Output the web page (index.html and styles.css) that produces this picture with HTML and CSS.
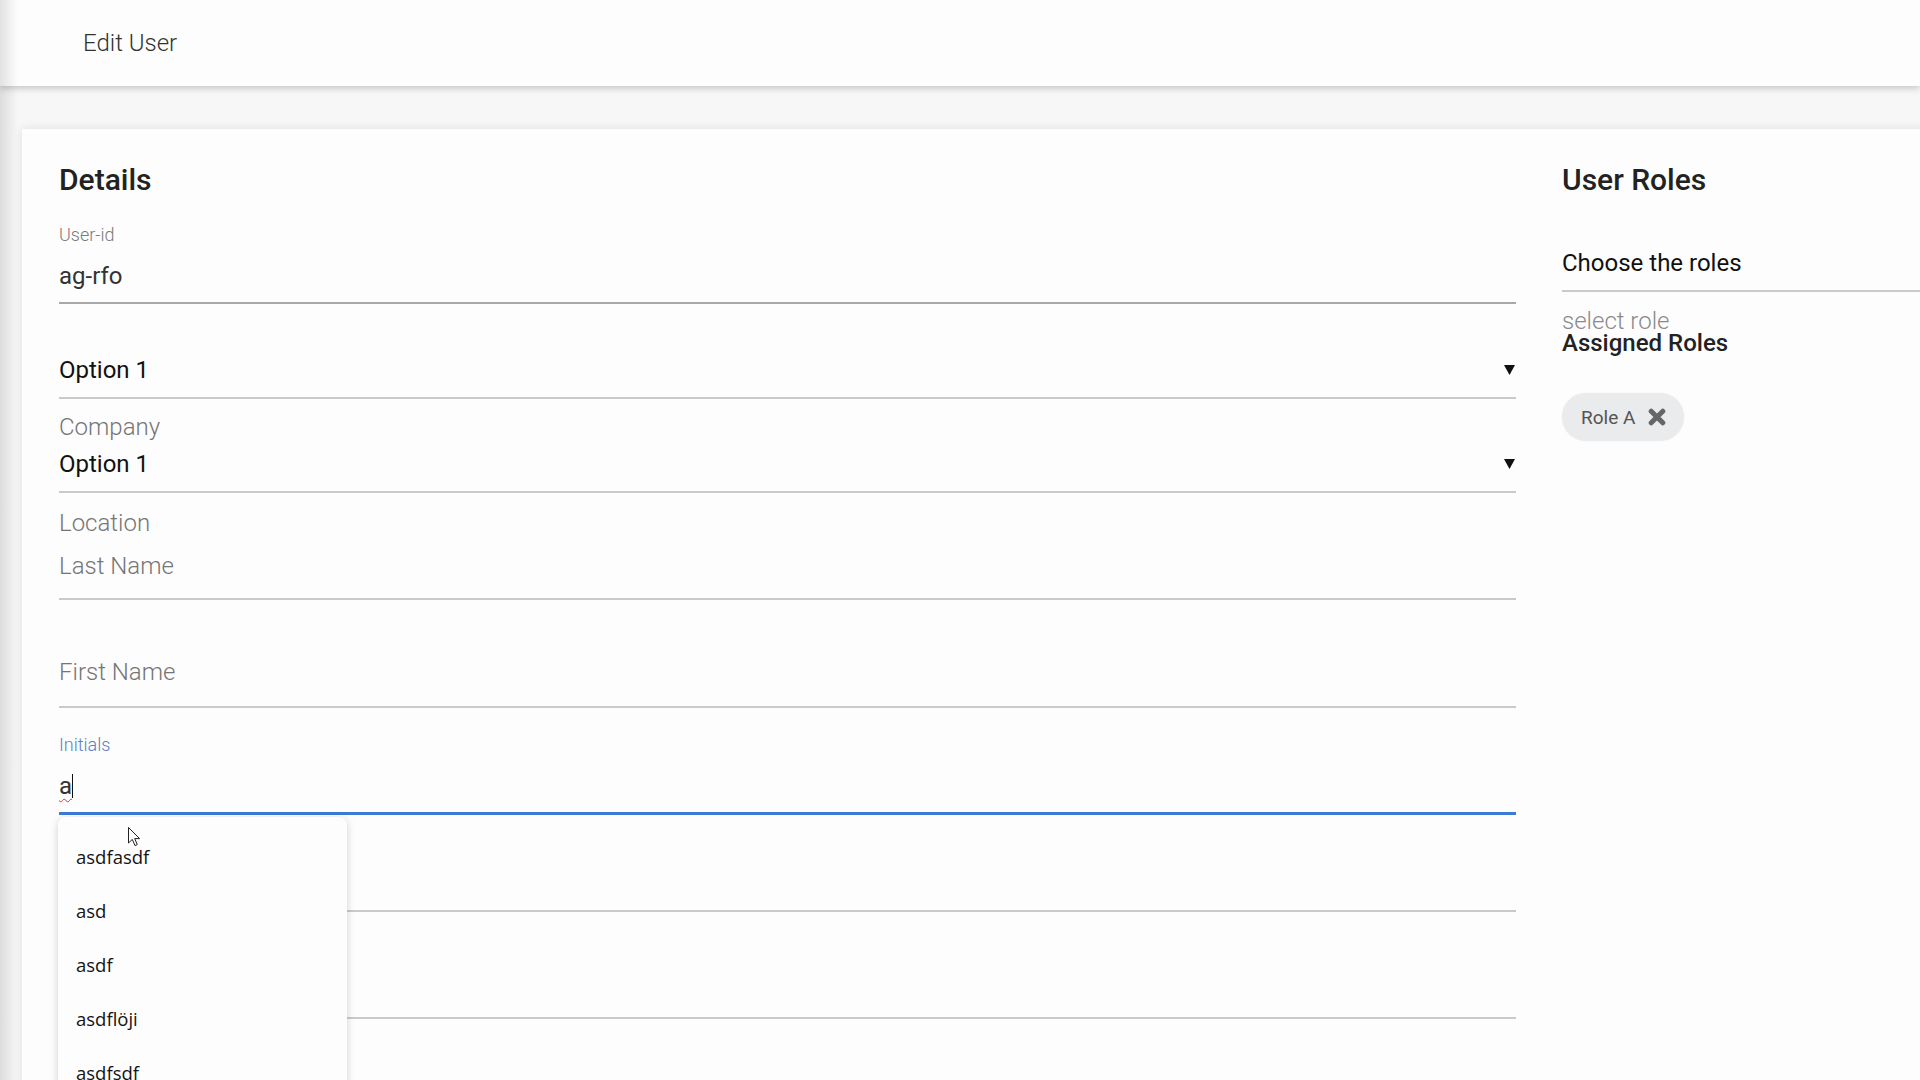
FILE: index.html
```html
<!DOCTYPE html>
<html lang="en">
<head>
<meta charset="utf-8">
<title>Edit User</title>
<link rel="stylesheet" href="styles.css">
</head>
<body>
<header class="topbar"><span class="title">Edit User</span></header>
<main class="main">
  <section class="card">
    <div class="col-details">
      <h2 class="heading">Details</h2>
      <div class="field field-userid">
        <div class="label-sm">User-id</div>
        <div class="value">ag-rfo</div>
      </div>
      <div class="field field-select1">
        <div class="select-row">
          <span class="value dark">Option 1</span>
          <svg class="tri" width="11" height="10" viewBox="0 0 11 10"><path d="M0 0 H11 L5.5 10 Z" fill="#111"/></svg>
        </div>
      </div>
      <div class="field field-company">
        <div class="label-lg">Company</div>
        <div class="select-row gap9">
          <span class="value dark">Option 1</span>
          <svg class="tri" width="11" height="10" viewBox="0 0 11 10"><path d="M0 0 H11 L5.5 10 Z" fill="#111"/></svg>
        </div>
      </div>
      <div class="field field-name">
        <div class="label-lg">Location</div>
        <div class="label-lg mt15">Last Name</div>
      </div>
      <div class="field field-first">
        <div class="label-lg">First Name</div>
      </div>
      <div class="field field-initials">
        <div class="label-sm blue">Initials</div>
        <div class="value typed-row"><span class="typed">a</span><span class="text-caret"></span></div>
        <ul class="suggestions">
          <li>asdfasdf</li>
          <li>asd</li>
          <li>asdf</li>
          <li>asdflöji</li>
          <li>asdfsdf</li>
          <svg class="pointer" width="13" height="20" viewBox="0 0 13 20"><path d="M0.5 0.5 L0.5 16 L4.3 12.4 L7 18.6 L9.3 17.6 L6.7 11.6 L11.6 11.6 Z" fill="#fff" stroke="#222" stroke-width="1" stroke-linejoin="round"/></svg>
        </ul>
      </div>
      <div class="field field-blank1"></div>
      <div class="field field-blank2"></div>
    </div>
    <div class="col-roles">
      <h2 class="heading">User Roles</h2>
      <div class="choose">Choose the roles</div>
      <div class="select-role">select role</div>
      <div class="assigned">Assigned Roles</div>
      <div class="chips">
        <span class="chip">Role A
          <svg class="chip-x" width="18" height="18" viewBox="0 0 18 18"><path d="M3.2 3.2 L14.8 14.8 M14.8 3.2 L3.2 14.8" stroke="#666" stroke-width="5" stroke-linecap="round"/></svg>
        </span>
      </div>
    </div>
  </section>
</main>
</body>
</html>
```
FILE: styles.css
```css
html, body {
  margin: 0;
  padding: 0;
  height: 1080px;
  overflow: hidden;
}
body {
  background: #f7f7f7;
  font-family: Roboto, "Liberation Sans", sans-serif;
  position: relative;
}
body::before {
  content: "";
  position: absolute;
  left: 0;
  top: 0;
  bottom: 0;
  width: 18px;
  background: linear-gradient(to right, rgba(0,0,0,0.11), rgba(0,0,0,0));
  z-index: 5;
  pointer-events: none;
}
.topbar {
  height: 86px;
  background: #fdfdfd;
  box-shadow: 0 2px 7px rgba(0,0,0,0.22);
  display: flex;
  align-items: center;
  padding-left: 83px;
  position: relative;
  z-index: 2;
}
.title {
  font-size: 24px;
  font-weight: 300;
  color: #333;
  line-height: 28px;
}
.main {
  padding: 43px 0 0 22px;
}
.card {
  background: #fdfdfd;
  box-shadow: 0 0 9px rgba(0,0,0,0.10);
  margin-right: -40px;
  padding: 33px 0 0 37px;
  display: flex;
  height: 1000px;
}
.col-details {
  width: 1457px;
  flex: none;
}
.col-roles {
  margin-left: 46px;
  flex: 1;
}
.heading {
  margin: 0;
  font-size: 30px;
  line-height: 36px;
  font-weight: 500;
  color: #222;
}
.field {
  border-bottom: 2px solid #cacaca;
}
.label-sm {
  font-size: 18px;
  line-height: 22px;
  font-weight: 300;
  color: #7a7a7a;
}
.label-sm.blue {
  color: #5a80c4;
}
.label-lg {
  font-size: 24px;
  line-height: 28px;
  font-weight: 300;
  color: #757575;
}
.mt15 { margin-top: 15px; }
.value {
  font-size: 24px;
  line-height: 28px;
  color: #333;
}
.value.dark { color: #111; }
.select-row {
  display: flex;
  justify-content: space-between;
  align-items: center;
}
.select-row.gap9 { margin-top: 9px; }
.tri { margin-right: 1px; }
.field-userid {
  padding: 26px 0 12px;
  border-bottom-color: #a9a9a9;
}
.field-userid .value { margin-top: 16px; }
.field-select1 { padding: 52px 0 13px; }
.field-company { padding: 14px 0 13px; }
.field-name { padding: 16px 0 18px; }
.field-first { padding: 58px 0 20px; }
.field-initials {
  padding: 26px 0 12px;
  border-bottom: 3px solid #3b7bd6;
  position: relative;
}
.typed-row {
  margin-top: 16px;
  display: flex;
  align-items: center;
  color: #333;
}
.typed {
  text-decoration: underline wavy #d33;
  text-decoration-thickness: 1px;
  text-underline-offset: 4px;
}
.text-caret {
  width: 1px;
  height: 24px;
  background: #111;
}
.field-blank1 { height: 95px; }
.field-blank2 { height: 105px; }
.suggestions {
  position: absolute;
  left: -1px;
  top: calc(100% + 5px);
  width: 289px;
  height: 300px;
  margin: 0;
  padding: 13px 0 0;
  list-style: none;
  background: #fdfdfd;
  border-radius: 8px;
  box-shadow: 0 2px 8px rgba(0,0,0,0.18);
  z-index: 3;
}
.suggestions li {
  height: 54px;
  line-height: 54px;
  padding-left: 18px;
  font-family: "Open Sans", "Noto Sans", sans-serif;
  font-size: 18.5px;
  font-weight: 500;
  color: #141414;
}
.pointer {
  position: absolute;
  left: 70px;
  top: 10px;
}
.choose {
  margin-top: 51px;
  padding-bottom: 13px;
  border-bottom: 2px solid #cacaca;
  font-size: 24px;
  line-height: 28px;
  color: #111;
}
.select-role {
  margin-top: 18px;
  font-size: 24px;
  line-height: 22px;
  font-weight: 300;
  color: #8a8a8a;
}
.assigned {
  font-size: 24px;
  line-height: 22px;
  font-weight: 500;
  color: #222;
}
.chips {
  margin-top: 39px;
  display: flex;
}
.chip {
  display: inline-flex;
  align-items: center;
  gap: 13px;
  height: 48px;
  padding: 0 18px 0 19px;
  border-radius: 24px;
  background: #e9ebec;
  box-shadow: 0 0 2px rgba(0,0,0,0.06);
  font-size: 19px;
  color: #555;
}
```
